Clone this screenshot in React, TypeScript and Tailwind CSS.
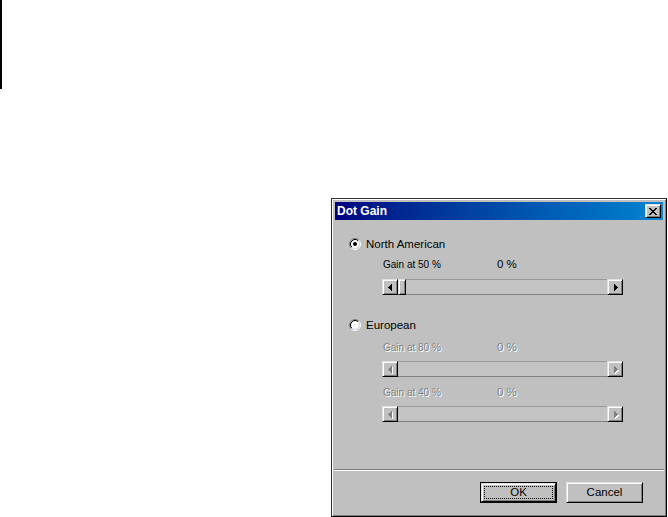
import React from "react";

const font = { fontFamily: '"Liberation Sans", Arial, sans-serif' };

function Radio({ checked }: { checked: boolean }) {
  return (
    <svg width="12" height="12" viewBox="0 0 12 12" className="shrink-0">
      <path d="M2.11 9.89 A5.5 5.5 0 0 1 9.89 2.11" stroke="#808080" strokeWidth="1" fill="none" />
      <path d="M9.89 2.11 A5.5 5.5 0 0 1 2.11 9.89" stroke="#ffffff" strokeWidth="1" fill="none" />
      <circle cx="6" cy="6" r="4" fill="#ffffff" />
      <path d="M2.82 9.18 A4.5 4.5 0 0 1 9.18 2.82" stroke="#000000" strokeWidth="1" fill="none" />
      <path d="M9.18 2.82 A4.5 4.5 0 0 1 2.82 9.18" stroke="#dfdfdf" strokeWidth="1" fill="none" />
      {checked && <circle cx="6" cy="6" r="2" fill="#000000" />}
    </svg>
  );
}

function ArrowGlyph({ dir, disabled }: { dir: "left" | "right"; disabled: boolean }) {
  const cols = [
    { y: 3, h: 1 },
    { y: 2, h: 3 },
    { y: 1, h: 5 },
    { y: 0, h: 7 },
  ];
  const ordered = dir === "left" ? cols : [...cols].reverse();
  const color = disabled ? "#808080" : "#000000";
  return (
    <svg width="5" height="8" viewBox="0 0 5 8" shapeRendering="crispEdges">
      {disabled &&
        ordered.map((c, i) => (
          <rect key={"s" + i} x={i + 1} y={c.y + 1} width="1" height={c.h} fill="#ffffff" />
        ))}
      {ordered.map((c, i) => (
        <rect key={i} x={i} y={c.y} width="1" height={c.h} fill={color} />
      ))}
    </svg>
  );
}

function RaisedBox({ className, children }: { className: string; children?: React.ReactNode }) {
  return (
    <div
      className={
        "bg-[#c0c0c0] border border-t-[#dfdfdf] border-l-[#dfdfdf] border-r-black border-b-black shadow-[inset_1px_1px_0_#ffffff,inset_-1px_-1px_0_#808080] " +
        className
      }
    >
      {children}
    </div>
  );
}

function ScrollBar({ disabled }: { disabled: boolean }) {
  return (
    <div className="flex h-4 w-[241px]">
      <RaisedBox className="w-4 h-4 flex items-center justify-center pl-[1px] pt-[1px]">
        <ArrowGlyph dir="left" disabled={disabled} />
      </RaisedBox>
      {!disabled && <RaisedBox className="w-2 h-4" />}
      <div className="flex-1 h-4 bg-[#c3c3c3] border-t border-b border-t-[#9a9a9a] border-b-[#808080]" />
      <RaisedBox className="w-4 h-4 flex items-center justify-center pl-[2px] pt-[1px]">
        <ArrowGlyph dir="right" disabled={disabled} />
      </RaisedBox>
    </div>
  );
}

function GainRow({ label, disabled }: { label: string; disabled: boolean }) {
  const cls = disabled ? "text-[#808080] [text-shadow:1px_1px_0_#ffffff]" : "text-black";
  return (
    <div className={"flex items-center h-[13px] pl-[1px] " + cls}>
      <span className="w-[114px] text-[10px] leading-[13px]">{label}</span>
      <span className="text-[11.5px] leading-[13px]">0 %</span>
    </div>
  );
}

export default function App() {
  return (
    <div className="w-[668px] h-[517px] bg-white overflow-hidden flex flex-col" style={font}>
      <div className="w-[2px] h-[89px] bg-black shrink-0" />
      <div className="ml-[331px] mt-[109px] w-[336px] h-[319px] shrink-0 bg-[#c0c0c0] border border-t-[#303030] border-l-[#303030] border-r-black border-b-black shadow-[inset_1px_1px_0_#ffffff,inset_-1px_-1px_0_#808080] p-[3px] flex flex-col">
        {/* Title bar */}
        <div className="h-[18px] flex items-center justify-between bg-gradient-to-r from-[#000080] to-[#1084d0] pl-[2px] pr-[2px]">
          <span className="text-white font-bold text-[12px] leading-[18px]">Dot Gain</span>
          <RaisedBox className="w-4 h-[14px] flex items-center justify-center">
            <svg width="8" height="7" viewBox="0 0 8 7" shapeRendering="crispEdges">
              <path d="M0 0h2v1h-2zM6 0h2v1h-2zM1 1h2v1h-2zM5 1h2v1h-2zM2 2h4v1h-4zM3 3h2v1h-2zM2 4h4v1h-4zM1 5h2v1h-2zM5 5h2v1h-2zM0 6h2v1h-2zM6 6h2v1h-2z" fill="#000" />
            </svg>
          </RaisedBox>
        </div>

        {/* Client area */}
        <div className="flex flex-col flex-1">
          <div className="flex items-center h-4 mt-[16px] pl-[14px]">
            <Radio checked={true} />
            <span className="ml-[5px] text-[11.5px] leading-4 text-black">North American</span>
          </div>
          <div className="pl-[47px] flex flex-col">
            <div className="mt-[6px]">
              <GainRow label="Gain at 50 %" disabled={false} />
            </div>
            <div className="mt-[8px]">
              <ScrollBar disabled={false} />
            </div>
          </div>

          <div className="flex items-center h-4 mt-[22px] pl-[14px]">
            <Radio checked={false} />
            <span className="ml-[5px] text-[11.5px] leading-4 text-black">European</span>
          </div>
          <div className="pl-[47px] flex flex-col">
            <div className="mt-[8px]">
              <GainRow label="Gain at 80 %" disabled={true} />
            </div>
            <div className="mt-[7px]">
              <ScrollBar disabled={true} />
            </div>
            <div className="mt-[9px]">
              <GainRow label="Gain at 40 %" disabled={true} />
            </div>
            <div className="mt-[7px]">
              <ScrollBar disabled={true} />
            </div>
          </div>

          {/* Separator */}
          <div className="mt-[47px] -mx-[1px] h-[2px] border-t border-t-[#808080] border-b border-b-white" />

          {/* Buttons */}
          <div className="flex justify-end gap-[9px] pr-[20px] mt-[11px]">
            <div className="w-[77px] h-[21px] border border-black">
              <RaisedBox className="w-full h-full flex items-center justify-center p-[2px]">
                <div className="w-full h-full border border-dotted border-black flex items-center justify-center">
                  <span className="text-[11.5px] leading-none text-black">OK</span>
                </div>
              </RaisedBox>
            </div>
            <RaisedBox className="w-[77px] h-[21px] flex items-center justify-center">
              <span className="text-[11.5px] leading-none text-black">Cancel</span>
            </RaisedBox>
          </div>
        </div>
      </div>
    </div>
  );
}
